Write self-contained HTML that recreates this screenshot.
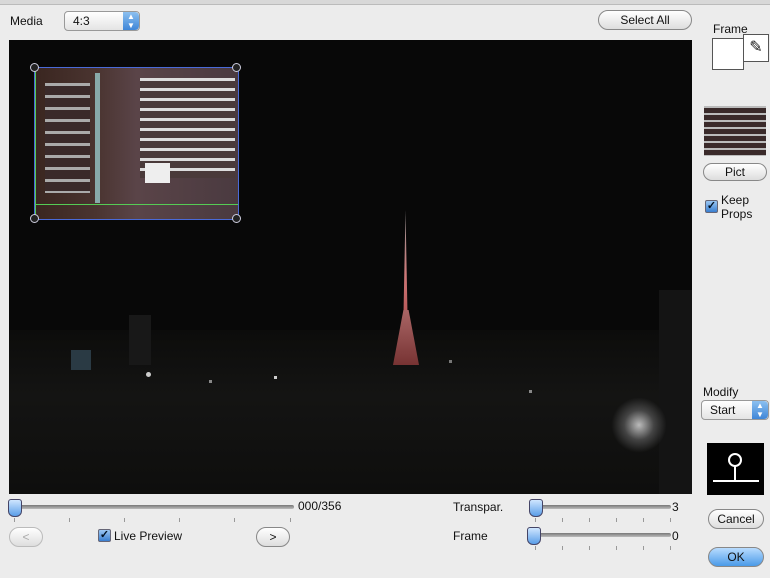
<!DOCTYPE html>
<html><head><style>
body{margin:0;width:770px;height:578px;background:#ececec;font-family:"Liberation Sans",sans-serif;font-size:12px;color:#111;position:relative;overflow:hidden}
.a{position:absolute}
.btn{position:absolute;border:1px solid #888;border-radius:11px;background:linear-gradient(#fff,#ddd);text-align:center;font-size:12px;line-height:18px;height:18px}
.pop{position:absolute;border:1px solid #999;border-radius:4px;background:linear-gradient(#fff,#e4e4e4);height:18px;line-height:18px;font-size:12px}
.arr{position:absolute;right:0;top:0;width:16px;height:18px;background:linear-gradient(#8cc0f0,#3f86d8);border-radius:0 4px 4px 0;color:#fff;font-size:8px;line-height:9px;text-align:center}
.track{position:absolute;height:4px;background:linear-gradient(#777,#bbb);border-radius:2px}
.thumb{position:absolute;width:12px;height:16px;background:linear-gradient(#cfe6ff,#5a9ee8);border:1px solid #446;border-radius:3px 3px 6px 6px}
.tick{position:absolute;width:1px;height:4px;background:#999}
.cb{position:absolute;width:11px;height:11px;border:1px solid #667;background:linear-gradient(#9cc8f4,#3a7fd0);border-radius:2px;color:#012;font-size:11px;line-height:11px;text-align:center;font-weight:bold}
.l{position:absolute;background:#ccc;width:3px;height:3px}
</style></head><body>
<div class="a" style="left:0;top:0;width:770px;height:4px;background:#d8d8d8;border-bottom:1px solid #bbb"></div>
<div class="a" style="left:10px;top:14px">Media</div>
<div class="pop" style="left:64px;top:11px;width:74px"><span style="padding-left:8px">4:3</span><div class="arr">▲<br>▼</div></div>
<div class="btn" style="left:598px;top:10px;width:92px">Select All</div>
<div class="a" style="left:713px;top:22px">Frame</div>
<div class="a" style="left:712px;top:38px;width:30px;height:30px;background:#fff;border:1px solid #555"></div>
<div class="a" style="left:743px;top:34px;width:24px;height:26px;background:#fff;border:1px solid #555;font-size:16px;text-align:center;line-height:26px">✎</div>

<div class="a" style="left:9px;top:40px;width:683px;height:454px;background:#080808;overflow:hidden">
 <div class="a" style="left:0;top:290px;width:683px;height:164px;background:linear-gradient(#0c0c0b,#141413 40%,#0e0e0d)"></div>
 <div class="a" style="left:650px;top:250px;width:33px;height:204px;background:#141414"></div>
 <div class="a" style="left:394px;top:170px;width:5px;height:130px;background:linear-gradient(#999,#c77,#a44);clip-path:polygon(50% 0,100% 100%,0 100%)"></div>
 <div class="a" style="left:384px;top:270px;width:26px;height:55px;background:linear-gradient(#a66,#733);clip-path:polygon(40% 0,60% 0,100% 100%,0 100%)"></div>
 <div class="a" style="left:600px;top:355px;width:60px;height:60px;background:radial-gradient(#bbb,#444 35%,transparent 65%)"></div>
 <div class="a" style="left:62px;top:310px;width:20px;height:20px;background:#2a3a44"></div>
 <div class="a" style="left:120px;top:275px;width:22px;height:50px;background:#181818"></div>
 <div class="l" style="left:137px;top:332px;width:5px;height:5px;border-radius:50%"></div>
 <div class="l" style="left:265px;top:336px"></div><div class="l" style="left:200px;top:340px;background:#888"></div><div class="l" style="left:520px;top:350px;background:#888"></div><div class="l" style="left:440px;top:320px;background:#777"></div>
 <div class="a" style="left:25px;top:27px;width:203px;height:151px;border:1px solid #4a6ad8;background:linear-gradient(90deg,#3a2620,#4a3430 30%,#5a4448 50%,#4a3a40 100%)">
  <div class="a" style="left:0;top:136px;width:203px;height:1px;background:#5c5"></div>
  <div class="a" style="left:0;top:0;width:1px;height:151px;background:#5c5"></div>
  <div class="a" style="left:10px;top:15px;width:45px;height:110px;background:repeating-linear-gradient(#aaa 0 3px,#3a2a2a 3px 12px)"></div>
  <div class="a" style="left:60px;top:5px;width:5px;height:130px;background:#8aa"></div>
  <div class="a" style="left:105px;top:10px;width:95px;height:100px;background:repeating-linear-gradient(#ddd 0 3px,#4a3a3a 3px 10px)"></div>
  <div class="a" style="left:110px;top:95px;width:25px;height:20px;background:#eee"></div>
 </div>
 <div class="a" style="left:21px;top:23px;width:7px;height:7px;border:1px solid #ccd;border-radius:50%;background:#222"></div>
 <div class="a" style="left:223px;top:23px;width:7px;height:7px;border:1px solid #ccd;border-radius:50%;background:#222"></div>
 <div class="a" style="left:21px;top:174px;width:7px;height:7px;border:1px solid #ccd;border-radius:50%;background:#222"></div>
 <div class="a" style="left:223px;top:174px;width:7px;height:7px;border:1px solid #ccd;border-radius:50%;background:#222"></div>
</div>

<div class="a" style="left:704px;top:106px;width:62px;height:50px;background:repeating-linear-gradient(#bbb 0 2px,#3a2a2a 2px 7px)"></div>
<div class="btn" style="left:703px;top:163px;width:62px;height:16px;line-height:16px">Pict</div>
<div class="cb" style="left:705px;top:200px">✓</div>
<div class="a" style="left:721px;top:193px;line-height:14px">Keep<br>Props</div>
<div class="a" style="left:703px;top:385px">Modify</div>
<div class="pop" style="left:701px;top:400px;width:66px"><span style="padding-left:8px">Start</span><div class="arr">▲<br>▼</div></div>
<div class="a" style="left:707px;top:443px;width:57px;height:52px;background:#000">
 <div class="a" style="left:21px;top:10px;width:10px;height:10px;border:2px solid #fff;border-radius:50%"></div>
 <div class="a" style="left:27px;top:23px;width:2px;height:14px;background:#fff"></div>
 <div class="a" style="left:6px;top:37px;width:46px;height:2px;background:#fff"></div>
</div>
<div class="btn" style="left:708px;top:509px;width:54px;height:18px">Cancel</div>
<div class="btn" style="left:708px;top:547px;width:54px;background:linear-gradient(#b8dcff,#4a9ae8)">OK</div>

<div class="track" style="left:14px;top:505px;width:280px"></div>
<div class="thumb" style="left:8px;top:499px"></div>
<div class="a" style="left:298px;top:499px">000/356</div>
<div class="tick" style="left:14px;top:518px"></div><div class="tick" style="left:69px;top:518px"></div><div class="tick" style="left:124px;top:518px"></div><div class="tick" style="left:179px;top:518px"></div><div class="tick" style="left:234px;top:518px"></div><div class="tick" style="left:290px;top:518px"></div>
<div class="btn" style="left:9px;top:527px;width:32px;color:#aaa;border-color:#bbb">&lt;</div>
<div class="cb" style="left:98px;top:529px">✓</div>
<div class="a" style="left:114px;top:529px">Live Preview</div>
<div class="btn" style="left:256px;top:527px;width:32px">&gt;</div>
<div class="a" style="left:453px;top:500px">Transpar.</div>
<div class="track" style="left:533px;top:505px;width:138px"></div>
<div class="thumb" style="left:529px;top:499px"></div>
<div class="a" style="left:672px;top:500px">3</div>
<div class="a" style="left:453px;top:529px">Frame</div>
<div class="track" style="left:533px;top:533px;width:138px"></div>
<div class="thumb" style="left:527px;top:527px"></div>
<div class="a" style="left:672px;top:529px">0</div>
<div class="tick" style="left:535px;top:518px"></div><div class="tick" style="left:562px;top:518px"></div><div class="tick" style="left:589px;top:518px"></div><div class="tick" style="left:616px;top:518px"></div><div class="tick" style="left:643px;top:518px"></div><div class="tick" style="left:670px;top:518px"></div>
<div class="tick" style="left:535px;top:546px"></div><div class="tick" style="left:562px;top:546px"></div><div class="tick" style="left:589px;top:546px"></div><div class="tick" style="left:616px;top:546px"></div><div class="tick" style="left:643px;top:546px"></div><div class="tick" style="left:670px;top:546px"></div>
</body></html>
